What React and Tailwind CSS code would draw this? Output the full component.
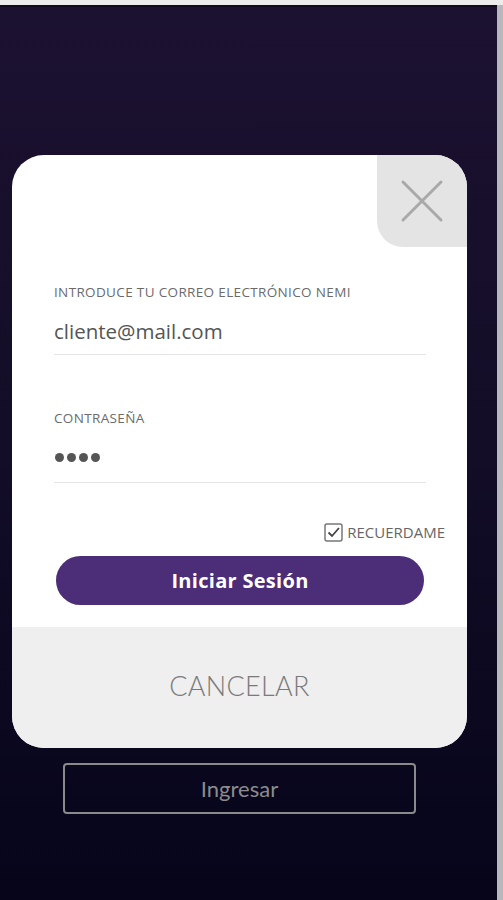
import React from 'react';

const CloseIcon = () => (
    <svg width="44" height="44" viewBox="0 0 44 44" fill="none">
        <path d="M3 3 L41 41 M41 3 L3 41" stroke="#a9a9a9" strokeWidth="3" strokeLinecap="round" />
    </svg>
);

const CheckIcon = () => (
    <svg width="19" height="19" viewBox="0 0 19 19" fill="none">
        <rect x="1" y="1" width="17" height="17" rx="2" stroke="#777" strokeWidth="1.5" fill="white" />
        <path d="M4.5 9.5 L8 13 L15 5" stroke="#444" strokeWidth="1.8" fill="none" />
    </svg>
);

const Field = ({ label, children, className }) => (
    <div className={className}>
        <div className="text-[13.5px] leading-[16px] text-[#6b6b6b] tracking-[0.35px] uppercase">{label}</div>
        <div className="border-b border-[#e3e3e3]">{children}</div>
    </div>
);

export default function App() {
    return (
        <div className="w-[503px] h-[900px] flex flex-col bg-[#e9e9e9] overflow-hidden" style={{ fontFamily: '"Open Sans", sans-serif' }}>
            <div className="h-[5px] bg-[#ececec]" />
            <div className="flex flex-1">
                <div className="flex-1 bg-gradient-to-b from-[#1c1131] via-[#130d27] to-[#06051a] border-t-2 border-[#0f0a1e] pt-[148px]">
                    <div className="ml-[12px] w-[455px] h-[593px] bg-white rounded-[32px] overflow-hidden flex flex-col">
                        <div className="flex justify-end">
                            <div className="w-[90px] h-[92px] bg-[#e4e4e4] rounded-bl-[26px] flex items-center justify-center">
                                <CloseIcon />
                            </div>
                        </div>
                        <div className="pl-[42px] pr-[41px]">
                            <Field label="Introduce tu correo electrónico Nemi" className="mt-[37px]">
                                <div className="mt-[18px] pb-[10px] text-[20.5px] leading-[26px] text-[#555]">cliente@mail.com</div>
                            </Field>
                            <Field label="Contraseña" className="mt-[55px]">
                                <div className="mt-[18px] h-[38px] flex items-start pt-[9px] gap-[3px] pl-[1px]">
                                    <span className="w-[9px] h-[9px] rounded-full bg-[#555]" />
                                    <span className="w-[9px] h-[9px] rounded-full bg-[#555]" />
                                    <span className="w-[9px] h-[9px] rounded-full bg-[#555]" />
                                    <span className="w-[9px] h-[9px] rounded-full bg-[#555]" />
                                </div>
                            </Field>
                        </div>
                        <div className="flex justify-end items-center gap-[4px] pr-[22px] mt-[39px]">
                            <CheckIcon />
                            <span className="text-[15px] leading-[20px] text-[#666]">RECUERDAME</span>
                        </div>
                        <button className="ml-[44px] mt-[14px] w-[368px] h-[49px] rounded-full bg-[#4b2d78] text-white text-[20px] font-bold tracking-[0.3px]">
                            Iniciar Sesión
                        </button>
                        <div className="mt-[22px] flex-1 bg-[#efefef] flex items-center justify-center pb-[3px] text-[27px] text-[#7a7a7a] tracking-[0.3px]" style={{ fontFamily: '"Lato", sans-serif', fontWeight: 300 }}>
                            CANCELAR
                        </div>
                    </div>
                    <button className="ml-[63px] mt-[15px] w-[353px] h-[51px] border-2 border-[#8a8a8a] rounded-[4px] text-[#8c8c8c] text-[22px]" style={{ fontFamily: '"Lato", sans-serif' }}>
                        Ingresar
                    </button>
                </div>
                <div className="w-[6px] bg-[#b8b8bc]" />
            </div>
        </div>
    );
}
